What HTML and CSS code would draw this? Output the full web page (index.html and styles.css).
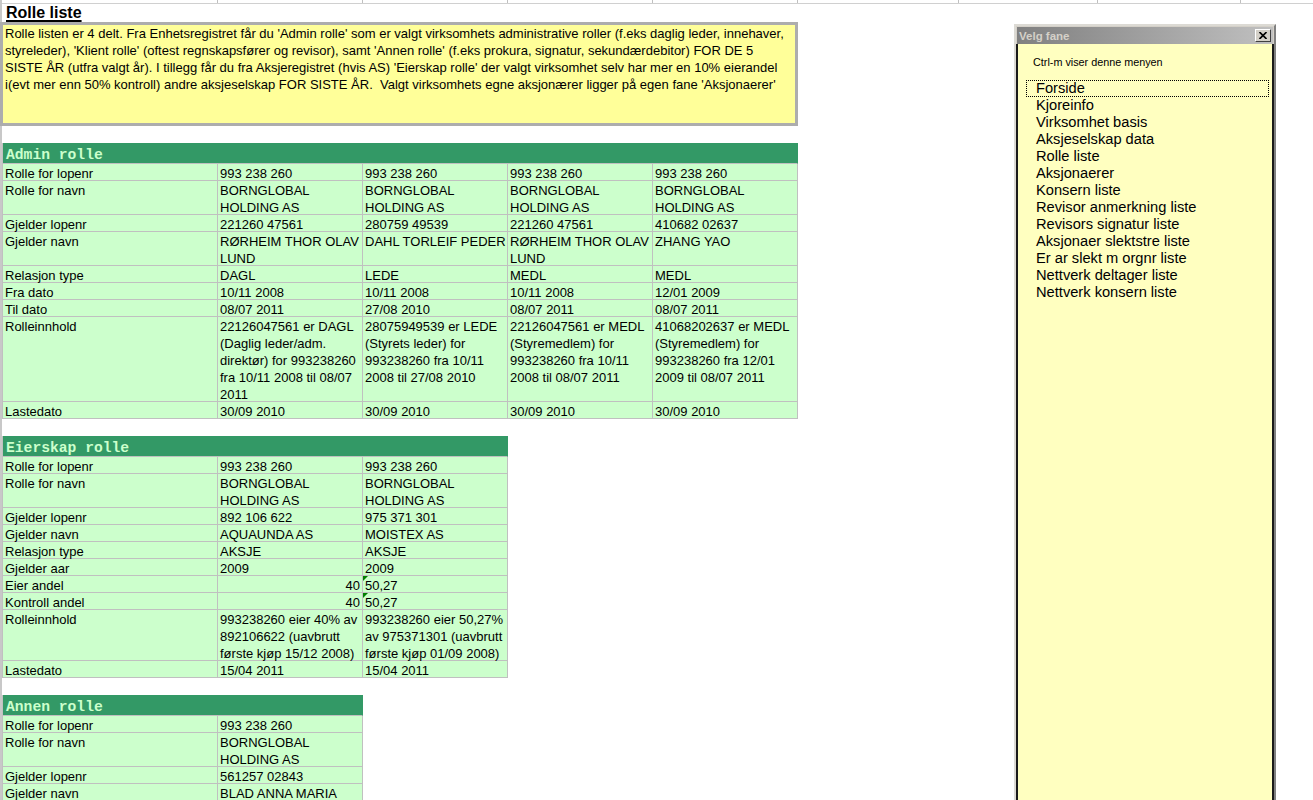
FILE: index.html
```html
<!DOCTYPE html>
<html lang="no">
<head>
<meta charset="utf-8">
<title>Rolle liste</title>
<link rel="stylesheet" href="styles.css">
</head>
<body>
<div class="sheet">
  <div class="topgrid">
    <span class="g ga"></span><span class="g gb"></span><span class="g gb"></span><span class="g gb"></span><span class="g gb"></span><span class="g gf"></span><span class="g gg"></span><span class="g gh"></span>
  </div>
  <div class="title-row"><span class="title">Rolle liste</span></div>
  <div class="note">Rolle listen er 4 delt. Fra Enhetsregistret får du 'Admin rolle' som er valgt virksomhets administrative roller (f.eks daglig leder, innehaver,
styreleder), 'Klient rolle' (oftest regnskapsfører og revisor), samt 'Annen rolle' (f.eks prokura, signatur, sekundærdebitor) FOR DE 5
SISTE ÅR (utfra valgt år). I tillegg får du fra Aksjeregistret (hvis AS) 'Eierskap rolle' der valgt virksomhet selv har mer en 10% eierandel
i(evt mer enn 50% kontroll) andre aksjeselskap FOR SISTE ÅR.  Valgt virksomhets egne aksjonærer ligger på egen fane 'Aksjonaerer'</div>
  <div class="blank"></div>

  <div class="tbl c5 admin">
    <div class="hd">Admin rolle</div>
    <div class="k">Rolle for lopenr</div><div>993 238 260</div><div>993 238 260</div><div>993 238 260</div><div>993 238 260</div>
    <div class="k">Rolle for navn</div><div>BORNGLOBAL<br>HOLDING AS</div><div>BORNGLOBAL<br>HOLDING AS</div><div>BORNGLOBAL<br>HOLDING AS</div><div>BORNGLOBAL<br>HOLDING AS</div>
    <div class="k">Gjelder lopenr</div><div>221260 47561</div><div>280759 49539</div><div>221260 47561</div><div>410682 02637</div>
    <div class="k">Gjelder navn</div><div>RØRHEIM THOR OLAV<br>LUND</div><div>DAHL TORLEIF PEDER</div><div>RØRHEIM THOR OLAV<br>LUND</div><div>ZHANG YAO</div>
    <div class="k">Relasjon type</div><div>DAGL</div><div>LEDE</div><div>MEDL</div><div>MEDL</div>
    <div class="k">Fra dato</div><div>10/11 2008</div><div>10/11 2008</div><div>10/11 2008</div><div>12/01 2009</div>
    <div class="k">Til dato</div><div>08/07 2011</div><div>27/08 2010</div><div>08/07 2011</div><div>08/07 2011</div>
    <div class="k">Rolleinnhold</div><div>22126047561 er DAGL<br>(Daglig leder/adm.<br>direktør) for 993238260<br>fra 10/11 2008 til 08/07<br>2011</div><div>28075949539 er LEDE<br>(Styrets leder) for<br>993238260 fra 10/11<br>2008 til 27/08 2010</div><div>22126047561 er MEDL<br>(Styremedlem) for<br>993238260 fra 10/11<br>2008 til 08/07 2011</div><div>41068202637 er MEDL<br>(Styremedlem) for<br>993238260 fra 12/01<br>2009 til 08/07 2011</div>
    <div class="k">Lastedato</div><div>30/09 2010</div><div>30/09 2010</div><div>30/09 2010</div><div>30/09 2010</div>
  </div>
  <div class="blank"></div>

  <div class="tbl c3 eier">
    <div class="hd">Eierskap rolle</div>
    <div class="k">Rolle for lopenr</div><div>993 238 260</div><div>993 238 260</div>
    <div class="k">Rolle for navn</div><div>BORNGLOBAL<br>HOLDING AS</div><div>BORNGLOBAL<br>HOLDING AS</div>
    <div class="k">Gjelder lopenr</div><div>892 106 622</div><div>975 371 301</div>
    <div class="k">Gjelder navn</div><div>AQUAUNDA AS</div><div>MOISTEX AS</div>
    <div class="k">Relasjon type</div><div>AKSJE</div><div>AKSJE</div>
    <div class="k">Gjelder aar</div><div>2009</div><div>2009</div>
    <div class="k">Eier andel</div><div class="num">40</div><div class="flag">50,27</div>
    <div class="k">Kontroll andel</div><div class="num">40</div><div class="flag">50,27</div>
    <div class="k">Rolleinnhold</div><div>993238260 eier 40% av<br>892106622 (uavbrutt<br>første kjøp 15/12 2008)</div><div>993238260 eier 50,27%<br>av 975371301 (uavbrutt<br>første kjøp 01/09 2008)</div>
    <div class="k">Lastedato</div><div>15/04 2011</div><div>15/04 2011</div>
  </div>
  <div class="blank"></div>

  <div class="tbl c2 annen">
    <div class="hd">Annen rolle</div>
    <div class="k">Rolle for lopenr</div><div>993 238 260</div>
    <div class="k">Rolle for navn</div><div>BORNGLOBAL<br>HOLDING AS</div>
    <div class="k">Gjelder lopenr</div><div>561257 02843</div>
    <div class="k">Gjelder navn</div><div>BLAD ANNA MARIA</div>
  </div>
</div>

<div class="form">
  <div class="titlebar">
    <span class="caption">Velg fane</span>
    <span class="close"><svg width="8" height="7" viewBox="0 0 8 7"><path d="M0.5 0 L7.5 7 M7.5 0 L0.5 7" stroke="#000" stroke-width="1.6" fill="none"/></svg></span>
  </div>
  <div class="fbody">
    <p class="hint">Ctrl-m viser denne menyen</p>
    <ul class="menu">
      <li class="focus">Forside</li>
      <li>Kjoreinfo</li>
      <li>Virksomhet basis</li>
      <li>Aksjeselskap data</li>
      <li>Rolle liste</li>
      <li>Aksjonaerer</li>
      <li>Konsern liste</li>
      <li>Revisor anmerkning liste</li>
      <li>Revisors signatur liste</li>
      <li>Aksjonaer slektstre liste</li>
      <li>Er ar slekt m orgnr liste</li>
      <li>Nettverk deltager liste</li>
      <li>Nettverk konsern liste</li>
    </ul>
  </div>
</div>
</body>
</html>
```

FILE: styles.css
```css
html, body {
  margin: 0;
  padding: 0;
}
body {
  width: 1313px;
  height: 800px;
  overflow: hidden;
  background: #ffffff;
  color: #000000;
  font-family: "Liberation Sans", Arial, sans-serif;
  position: relative;
}

.sheet {
  border-left: 2px solid #c8c8c8;
  min-height: 800px;
  width: 1000px;
}

/* gridline strip at the top */
.topgrid {
  display: flex;
  height: 4px;
  box-sizing: border-box;
  border-bottom: 1px solid #d0d0d0;
  width: 1311px;
}
.topgrid .g {
  display: block;
  box-sizing: border-box;
  height: 100%;
  border-right: 1px solid #c0c0c0;
}
.topgrid .ga { width: 216px; }
.topgrid .gb { width: 145px; }
.topgrid .gf { width: 161px; }
.topgrid .gg { width: 139px; }
.topgrid .gh { width: 143px; }

.title-row {
  height: 18px;
  line-height: 18px;
  padding-left: 4px;
}
.title {
  font-weight: bold;
  font-size: 16px;
  text-decoration: underline;
  text-decoration-thickness: 2px;
  text-underline-offset: 2px;
}

.note {
  margin-left: -2px;
  width: 798px;
  height: 104px;
  box-sizing: border-box;
  border: 3px solid #adadad;
  background: #ffff99;
  padding: 0 2px;
  font-size: 13px;
  line-height: 17px;
  white-space: pre;
  overflow: hidden;
}

.blank {
  height: 17px;
}

/* tables */
.tbl {
  display: grid;
  font-size: 13px;
  line-height: 17px;
}
.c5 { grid-template-columns: 216px repeat(4, 145px); }
.c3 { grid-template-columns: 216px repeat(2, 145px); }
.c2 { grid-template-columns: 216px 145px; }

.admin { grid-template-rows: 21px 17px 34px 17px 34px 17px 17px 17px 85px 17px; }
.eier  { grid-template-rows: 21px 17px 34px 17px 17px 17px 17px 17px 17px 51px 17px; }
.annen { grid-template-rows: 21px 17px 34px 17px 17px; }

.tbl > div {
  box-sizing: border-box;
  background: #ccffcc;
  border-right: 1px solid #c0c0c0;
  border-bottom: 1px solid #c0c0c0;
  padding: 1px 2px 0 2px;
  white-space: nowrap;
}
.tbl > .k {
  border-left: 1px solid #c0c0c0;
}
.tbl > .hd {
  grid-column: 1 / -1;
  background: #339966;
  color: #ccffcc;
  border-left: 1px solid #c0c0c0;
  border-right: 1px solid #339966;
  font-family: "Liberation Mono", "Courier New", monospace;
  font-weight: bold;
  font-size: 14.67px;
  line-height: 17px;
  padding: 4px 0 0 3px;
}
.tbl > .num {
  text-align: right;
}
.tbl > .flag {
  position: relative;
}
.tbl > .flag::before {
  content: "";
  position: absolute;
  left: 0;
  top: 0;
  border-top: 5px solid #008000;
  border-right: 5px solid transparent;
}

/* floating form window */
.form {
  position: absolute;
  left: 1014px;
  top: 24px;
  width: 262px;
  height: 790px;
  box-sizing: border-box;
  background: #d4d0c8;
  border-top: 2px solid #dcdad4;
  border-left: 2px solid #dcdad4;
  border-right: 2px solid #808080;
  display: flex;
  flex-direction: column;
}
.titlebar {
  margin: 1px 1px 0 1px;
  height: 17px;
  flex: 0 0 17px;
  background: linear-gradient(to right, #808080, #c0c0c0);
  position: relative;
  display: flex;
  align-items: center;
  padding-left: 2px;
}
.caption {
  color: #d4d0c8;
  font-family: "Liberation Sans", Arial, sans-serif;
  font-weight: bold;
  font-size: 11.5px;
}
.close {
  position: absolute;
  right: 2px;
  top: 2px;
  width: 16px;
  height: 13px;
  box-sizing: border-box;
  background: #d4d0c8;
  border: 1px solid;
  border-color: #ffffff #404040 #404040 #ffffff;
  display: flex;
  align-items: center;
  justify-content: center;
}
.close svg {
  display: block;
}
.fbody {
  flex: 1;
  background: #ffffc0;
  border-left: 2px solid #1a1a1a;
  border-right: 2px solid #1a1a1a;
}
.hint {
  margin: 0;
  padding: 11px 0 0 15px;
  font-size: 10.8px;
  line-height: 14px;
}
.menu {
  list-style: none;
  margin: 11px 0 0 8px;
  padding: 0;
  width: 243px;
}
.menu li {
  height: 17px;
  line-height: 17px;
  padding-left: 10px;
  font-size: 14.67px;
  white-space: nowrap;
}
.menu li.focus {
  outline: 1px dotted #000000;
  outline-offset: -1px;
}
```
